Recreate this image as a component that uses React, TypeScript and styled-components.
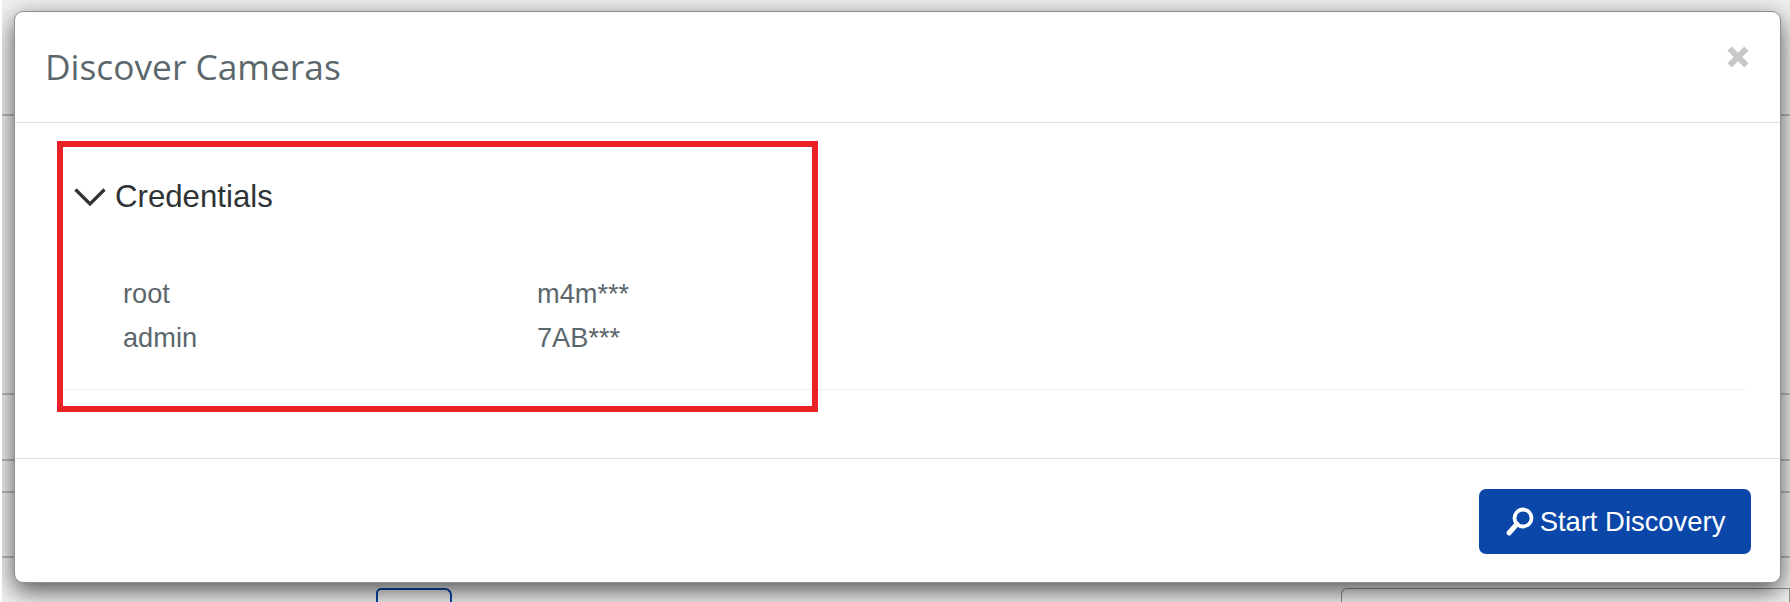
import React from "react";
import styled, { createGlobalStyle } from "styled-components";

const GlobalStyle = createGlobalStyle`
  html, body {
    margin: 0;
    height: 100%;
    overflow: hidden;
    background: #fff;
  }
`;

const Backdrop = styled.div`
  background: #f0f0f0;
  height: 602px;
  margin-left: 2px;
  overflow: hidden;
  position: relative;
`;

const PageRow = styled.div<{ $height: number }>`
  border-bottom: 2px solid rgba(0, 0, 0, 0.22);
  box-sizing: border-box;
  height: ${(p) => p.$height}px;
`;

const BottomBar = styled.div`
  display: flex;
  padding: 30px 0 0 374px;
`;

const PageTab = styled.div`
  border: 2px solid #0a47a9;
  border-bottom: 0;
  border-radius: 5px 7px 0 0;
  box-sizing: border-box;
  height: 30px;
  width: 78px;
`;

const PagePanel = styled.div`
  border: 1px solid #8f8f8f;
  border-bottom: 0;
  border-radius: 6px 0 0 0;
  height: 30px;
  margin-left: 889px;
  width: 460px;
`;

const Modal = styled.div`
  background: #fff;
  border: 1px solid #8f8f8f;
  border-radius: 9px;
  box-shadow: 0 8px 24px rgba(0, 0, 0, 0.66);
  box-sizing: border-box;
  display: flex;
  flex-direction: column;
  height: 572px;
  left: 12px;
  position: absolute;
  top: 11px;
  width: 1767px;
`;

const Header = styled.div`
  align-items: center;
  border-bottom: 1px solid #dedede;
  box-sizing: border-box;
  display: flex;
  flex: none;
  height: 111px;
  justify-content: space-between;
  padding: 0 30px 2px 30px;
`;

const Title = styled.h4`
  color: #5c676c;
  font-family: "Open Sans", sans-serif;
  font-size: 35.3px;
  font-weight: 400;
  margin: 0;
`;

const CloseIcon = styled.svg`
  height: 24px;
  margin-bottom: 18px;
  width: 24px;
`;

const Body = styled.div`
  box-sizing: border-box;
  flex: none;
  height: 335px;
  padding: 56px 34px 0 59px;
`;

const CredentialsHead = styled.div`
  align-items: center;
  color: #2f3335;
  display: flex;
  font-family: "Liberation Sans", Arial, sans-serif;
  font-size: 31.2px;
  gap: 9px;
  height: 36px;
`;

const CredentialsList = styled.div`
  border-bottom: 1px solid #eeeeee;
  margin-left: -11px;
  padding: 57px 0 29px 60px;
`;

const CredentialRow = styled.div`
  color: #5c676c;
  display: grid;
  font-family: "Liberation Sans", Arial, sans-serif;
  font-size: 27.2px;
  grid-template-columns: 414px 1fr;
  height: 44px;
  line-height: 44px;
`;

const Footer = styled.div`
  border-top: 1px solid #dedede;
  display: flex;
  flex: 1;
  justify-content: flex-end;
  padding: 30px 29px 0 0;
`;

const PrimaryButton = styled.button`
  align-items: center;
  background: #0a47a9;
  border: 0;
  border-radius: 7px;
  color: #fff;
  display: flex;
  font-family: "Liberation Sans", Arial, sans-serif;
  font-size: 27.4px;
  gap: 5px;
  height: 65px;
  justify-content: center;
  padding: 0;
  width: 272px;
`;

const Highlight = styled.div`
  border: 6px solid #e92228;
  box-sizing: border-box;
  height: 271px;
  left: 55px;
  pointer-events: none;
  position: absolute;
  top: 141px;
  width: 761px;
`;

const credentials = [
  { user: "root", password: "m4m***" },
  { user: "admin", password: "7AB***" },
];

const rowHeights = [116, 279, 66, 32, 65];

export default function App(): JSX.Element {
  return (
    <>
      <GlobalStyle />
      <Backdrop>
        {rowHeights.map((h) => (
          <PageRow key={h} $height={h} />
        ))}
        <BottomBar>
          <PageTab />
          <PagePanel />
        </BottomBar>
        <Modal>
          <Header>
            <Title>Discover Cameras</Title>
            <CloseIcon viewBox="0 0 20 20">
              <path d="M3 3 L17 17 M17 3 L3 17" stroke="#c8c8c8" strokeWidth="5" fill="none" />
            </CloseIcon>
          </Header>
          <Body>
            <CredentialsHead>
              <svg width="32" height="20" viewBox="0 0 32 20">
                <path d="M1.5 2.5 L16 17 L30.5 2.5" stroke="#2f3335" strokeWidth="3.2" fill="none" />
              </svg>
              Credentials
            </CredentialsHead>
            <CredentialsList>
              {credentials.map((c) => (
                <CredentialRow key={c.user}>
                  <span>{c.user}</span>
                  <span>{c.password}</span>
                </CredentialRow>
              ))}
            </CredentialsList>
          </Body>
          <Footer>
            <PrimaryButton>
              <svg width="30" height="30" viewBox="0 0 30 30">
                <circle cx="18" cy="11" r="8.5" stroke="#fff" strokeWidth="3.8" fill="none" />
                <path d="M12 17 L4 26" stroke="#fff" strokeWidth="5" strokeLinecap="round" />
              </svg>
              Start Discovery
            </PrimaryButton>
          </Footer>
        </Modal>
        <Highlight />
      </Backdrop>
    </>
  );
}
